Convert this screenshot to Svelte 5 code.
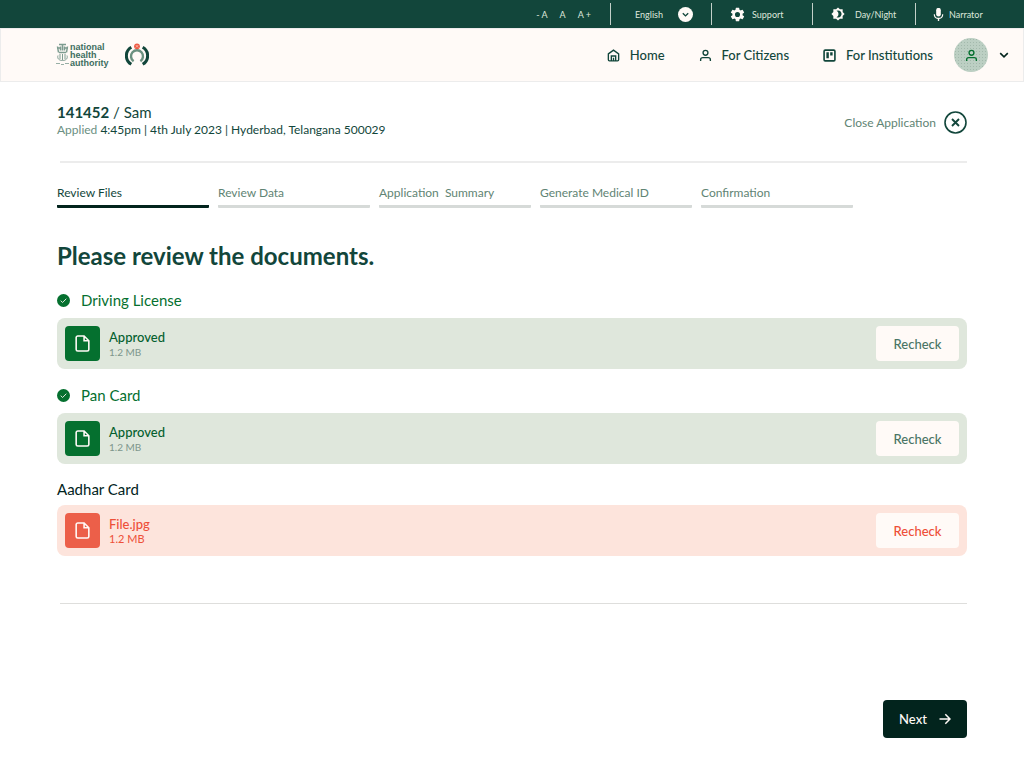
<script>
	const steps = ['Review Files', 'Review Data', 'Application  Summary', 'Generate Medical ID', 'Confirmation'];

	let current = $state(0);
	let language = $state('English');

	const documents = [
		{ name: 'Driving License', label: 'Approved', size: '1.2 MB', approved: true },
		{ name: 'Pan Card', label: 'Approved', size: '1.2 MB', approved: true },
		{ name: 'Aadhar Card', label: 'File.jpg', size: '1.2 MB', approved: false }
	];

	function next() {
		if (current < steps.length - 1) current += 1;
	}
</script>

{#snippet person()}
	<svg class="icon" viewBox="0 0 24 24" aria-hidden="true">
		<circle cx="12" cy="7" r="4.5" />
		<path d="M3 22v-2a4 4 0 0 1 4-4h10a4 4 0 0 1 4 4v2" />
	</svg>
{/snippet}

<div class="topbar">
	<div class="sizes">
		<button type="button" aria-label="Smaller text">- A</button>
		<button type="button" aria-label="Default text">A</button>
		<button type="button" aria-label="Larger text">A +</button>
	</div>
	<label class="tool language">
		<select bind:value={language} aria-label="Language">
			<option>English</option>
			<option>Hindi</option>
		</select>
		<svg width="15" height="15" viewBox="0 0 15 15" aria-hidden="true">
			<circle cx="7.5" cy="7.5" r="7.5" fill="#fffaf7" />
			<path d="M4.8 6.3l2.7 2.6 2.7-2.6" fill="none" stroke="#12463b" stroke-width="1.4" />
		</svg>
	</label>
	<button type="button" class="tool support">
		<svg width="17" height="17" viewBox="0 0 24 24" fill="#fffaf7" aria-hidden="true">
			<path d="M19.14 12.94c.04-.3.06-.61.06-.94s-.02-.64-.07-.94l2.03-1.58a.49.49 0 0 0 .12-.61l-1.92-3.32a.49.49 0 0 0-.59-.22l-2.39.96a7 7 0 0 0-1.62-.94l-.36-2.54a.48.48 0 0 0-.48-.41h-3.84a.47.47 0 0 0-.47.41l-.36 2.54c-.59.24-1.13.57-1.62.94l-2.39-.96a.48.48 0 0 0-.59.22L2.74 8.87a.47.47 0 0 0 .12.61l2.03 1.58a7.4 7.4 0 0 0 0 1.88l-2.03 1.58a.49.49 0 0 0-.12.61l1.92 3.32c.12.22.37.29.59.22l2.39-.96c.5.38 1.03.7 1.62.94l.36 2.54c.05.24.24.41.48.41h3.84c.24 0 .44-.17.47-.41l.36-2.54a7 7 0 0 0 1.62-.94l2.39.96c.22.08.47 0 .59-.22l1.92-3.32a.47.47 0 0 0-.12-.61zM12 15.6a3.6 3.6 0 1 1 0-7.2 3.6 3.6 0 0 1 0 7.2z" />
		</svg>
		Support
	</button>
	<button type="button" class="tool theme">
		<svg width="14" height="14" viewBox="0 0 24 24" fill="#fffaf7" aria-hidden="true">
			<path fill-rule="evenodd" d="M20 8.7V4h-4.7L12 .7 8.7 4H4v4.7L.7 12 4 15.3V20h4.7l3.3 3.3 3.3-3.3H20v-4.7l3.3-3.3zM12 18c-.9 0-1.7-.2-2.5-.6a6 6 0 0 0 0-10.8A6 6 0 1 1 12 18z" />
		</svg>
		Day/Night
	</button>
	<button type="button" class="tool narrator">
		<svg width="11" height="13" viewBox="5 2 14 19" fill="#fffaf7" aria-hidden="true">
			<path d="M12 14.5a3.4 3.4 0 0 0 3.4-3.4V5.2a3.4 3.4 0 0 0-6.8 0v5.9a3.4 3.4 0 0 0 3.4 3.4z" />
			<path d="M17.3 11a5.3 5.3 0 0 1-10.6 0H5a7 7 0 0 0 6 6.9V21h2v-3.1a7 7 0 0 0 6-6.9z" />
		</svg>
		Narrator
	</button>
</div>

<header class="navbar">
	<a href="#home" class="brand">
		<svg width="13" height="24" viewBox="0 0 13 24" fill="none" stroke="#7d9c90" aria-hidden="true">
			<path d="M3 1.5h7M4.5 3.5v4M6.5 1.5v6M8.5 3.5v4M1.5 3.5l1 6M11.5 3.5l-1 6" stroke-width="1.5" />
			<path d="M1 5h3M9 5h3M3 9.5h7" stroke-width="1.5" />
			<path d="M4 11v5M6.5 11v6M9 11v5" />
			<path d="M2 12.5c-1 3 1 5 4.5 5s5.5-2 4.5-5" />
			<path d="M0 20.5h4M5 21.5h3M9 20.5h4" stroke-width=".8" />
		</svg>
		<span class="wordmark">national<br />health<br />authority</span>
	</a>
	<a href="#mission" class="mission" aria-label="Digital health mission">
		<svg width="24" height="24" viewBox="0 0 24 24" fill="none" aria-hidden="true">
			<path d="M6.3 4.3a9.8 9.8 0 0 0 0 17M17.7 4.3a9.8 9.8 0 0 1 0 17" stroke="#12463b" stroke-width="3" />
			<path d="M8.6 18.2a6 6 0 1 1 6.8 0" stroke="#6b9180" stroke-width="2.4" />
			<circle cx="12" cy="3.3" r="2.9" fill="#ee5b46" />
			<path d="M10.8 2.1l2.4 2.4M13.2 2.1l-2.4 2.4" stroke="#f9c3b8" stroke-width=".8" />
		</svg>
	</a>

	<nav>
		<a href="#home">
			<svg class="icon" viewBox="0 0 24 24" aria-hidden="true">
				<path d="M2.5 9L12 2l9.5 7v11a2 2 0 0 1-2 2h-15a2 2 0 0 1-2-2z" />
				<path d="M8 22v-9h8v9M12 16v6" />
			</svg>
			Home
		</a>
		<a href="#citizens">{@render person()}For Citizens</a>
		<a href="#institutions">
			<svg class="icon" viewBox="0 0 24 24" aria-hidden="true">
				<rect x="2" y="2" width="20" height="20" rx="2" stroke-width="3" />
				<path d="M8.5 6v11M15.5 6v6" stroke-width="4.5" />
			</svg>
			For Institutions
		</a>
	</nav>

	<button type="button" class="account" aria-label="Account">
		<span class="avatar">{@render person()}</span>
		<svg width="10" height="10" viewBox="0 0 10 10" aria-hidden="true">
			<path d="M1.2 3.2L5 6.8l3.8-3.6" fill="none" stroke="#02241d" stroke-width="1.6" />
		</svg>
	</button>
</header>

<main>
	<div class="application">
		<div>
			<p class="applicant"><strong>141452</strong> / Sam</p>
			<p class="applied"><span>Applied</span> 4:45pm | 4th July 2023 | Hyderbad, Telangana 500029</p>
		</div>
		<button type="button" class="close">
			Close Application
			<svg width="23" height="23" viewBox="0 0 23 23" fill="none" stroke="#12463b" aria-hidden="true">
				<circle cx="11.5" cy="11.5" r="10.5" stroke-width="1.6" />
				<path d="M8 8l7 7M15 8l-7 7" stroke-width="1.9" />
			</svg>
		</button>
	</div>

	<hr class="thick" />

	<ol class="steps">
		{#each steps as step, i}
			<li class:current={i === current} aria-current={i === current ? 'step' : undefined}>{step}</li>
		{/each}
	</ol>

	<h1>Please review the documents.</h1>

	{#each documents as doc}
		<section class:approved={doc.approved}>
			<h2>
				{#if doc.approved}
					<svg width="13" height="13" viewBox="0 0 13 13" aria-hidden="true">
						<circle cx="6.5" cy="6.5" r="6.5" fill="#05702f" />
						<path d="M3.7 6.7l1.9 1.8 3.7-3.8" fill="none" stroke="#dfe7dc" />
					</svg>
				{/if}
				{doc.name}
			</h2>
			<div class="file">
				<span class="tile">
					<svg width="19" height="19" viewBox="0 0 24 24" aria-hidden="true">
						<path d="M14 2.5H6a2 2 0 0 0-2 2v15a2 2 0 0 0 2 2h12a2 2 0 0 0 2-2v-11zM14 2.5v6h6" />
					</svg>
				</span>
				<div class="info">
					<p>{doc.label}</p>
					<small>{doc.size}</small>
				</div>
				<button type="button">Recheck</button>
			</div>
		</section>
	{/each}

	<hr />

	<div class="actions">
		<button type="button" class="next" onclick={next}>
			Next
			<svg width="12" height="12" viewBox="0 0 12 12" fill="none" stroke="#fffaf7" stroke-width="1.5" aria-hidden="true">
				<path d="M.5 6h10.5M6.3 1.2L11 6l-4.7 4.8" />
			</svg>
		</button>
	</div>
</main>

<style>
	:global(body) {
		background: #fff;
		color: #12463b;
		font-family: Lato, 'Open Sans', sans-serif;
		font-size: 13px;
	}

	button,
	select {
		border: 0;
		padding: 0;
		background: none;
		color: inherit;
		font: inherit;
		cursor: pointer;
	}

	a {
		color: inherit;
		text-decoration: none;
	}

	svg {
		display: block;
		flex: none;
	}

	p,
	h1,
	h2 {
		margin: 0;
	}

	.icon {
		width: 13px;
		height: 13px;
		fill: none;
		stroke: currentColor;
		stroke-width: 2.5;
	}

	.topbar {
		display: flex;
		justify-content: flex-end;
		align-items: center;
		height: 28px;
		background: #12463b;
		color: #dfe7dc;
		font-size: 9px;
	}

	.sizes {
		display: flex;
		gap: 12px;
		padding-right: 19px;
	}

	.tool {
		display: flex;
		align-items: center;
		box-sizing: border-box;
		width: 101px;
		height: 22px;
		border-left: 1px solid #c3d0c9;
	}

	.language {
		justify-content: space-between;
		padding: 0 18px 0 24px;
	}

	.language select {
		appearance: none;
		width: 36px;
	}

	.support {
		gap: 6px;
		padding-left: 17px;
	}

	.theme {
		gap: 10px;
		width: 103px;
		padding-left: 18px;
	}

	.narrator {
		gap: 5px;
		width: 109px;
		padding-left: 17px;
	}

	.navbar {
		display: flex;
		align-items: center;
		box-sizing: border-box;
		height: 54px;
		padding: 0 14px 0 55px;
		border: 1px solid #ececec;
		background: #fffaf7;
	}

	.brand {
		display: flex;
		align-items: center;
		gap: 1px;
		margin-right: 16px;
	}

	.wordmark {
		color: #3d6d5f;
		font: 700 9px/8px 'Liberation Sans', sans-serif;
	}

	nav {
		display: flex;
		gap: 34px;
		margin: 0 21px 0 auto;
		font-weight: 500;
	}

	nav a {
		display: flex;
		align-items: center;
		gap: 10px;
	}

	.account {
		display: flex;
		align-items: center;
		gap: 11px;
	}

	.avatar {
		display: grid;
		place-items: center;
		width: 34px;
		height: 34px;
		border-radius: 50%;
		background: #bccfc3;
		background-image: radial-gradient(#a3b9ac 1px, transparent 1px);
		background-size: 3px 3px;
		color: #05702f;
	}

	main {
		padding: 20px 57px 30px;
	}

	.application {
		display: flex;
		justify-content: space-between;
		align-items: center;
		padding-bottom: 23px;
	}

	.applicant {
		font-size: 15px;
		line-height: 20px;
	}

	.applied {
		font-size: 12px;
		line-height: 16px;
	}

	.applied span {
		color: #6b8f82;
	}

	.close {
		display: flex;
		align-items: center;
		gap: 8px;
		padding-top: 4px;
		color: #5f8474;
		font-size: 12px;
	}

	hr {
		height: 1px;
		margin: 47px 0 96px 3px;
		border: 0;
		background: #dededc;
	}

	.thick {
		height: 2px;
		margin: 0 0 20px 3px;
		background: #ececec;
	}

	.steps {
		display: grid;
		grid-template-columns: repeat(5, minmax(0, 152px));
		gap: 9px;
		margin: 0;
		padding: 0;
		list-style: none;
		color: #5f8474;
		font-size: 12px;
		line-height: 20px;
		white-space: pre-wrap;
	}

	.steps li {
		padding-bottom: 2px;
		border-bottom: 3px solid #d6dad8;
		border-radius: 1px;
	}

	.steps .current {
		border-color: #02241d;
		color: #12463b;
	}

	h1 {
		margin-top: 32px;
		padding-bottom: 2px;
		font-size: 24px;
		line-height: 32px;
		font-weight: 700;
	}

	section {
		margin-top: 15px;
		color: #ee4f38;
	}

	h2 {
		display: flex;
		align-items: center;
		gap: 11px;
		margin-bottom: 6px;
		color: #02241d;
		font-size: 15px;
		line-height: 20px;
		font-weight: 400;
	}

	.approved {
		margin-top: 16px;
		color: #05602f;
	}

	.approved h2 {
		margin-bottom: 8px;
		color: #05702f;
	}

	.file {
		display: flex;
		align-items: center;
		gap: 9px;
		padding: 8px;
		border-radius: 8px;
		background: #fde4dc;
	}

	.approved .file {
		background: #dfe7dc;
	}

	.tile {
		display: grid;
		place-items: center;
		width: 35px;
		height: 35px;
		border-radius: 4px;
		background: #ec5f49;
	}

	.approved .tile {
		background: #05702f;
	}

	.tile svg {
		fill: none;
		stroke: #fffaf7;
		stroke-width: 2;
	}

	.info {
		flex: 1;
		line-height: 16px;
		font-weight: 500;
	}

	.info small {
		display: block;
		font-size: 11px;
		line-height: 14px;
		font-weight: 400;
	}

	.approved small {
		color: #7d968c;
		font-size: 10px;
	}

	.file button {
		width: 83px;
		height: 35px;
		border-radius: 4px;
		background: #fffaf7;
		font-weight: 500;
	}

	.approved button {
		color: #4a7565;
	}

	.actions {
		display: flex;
		justify-content: flex-end;
	}

	.next {
		display: flex;
		justify-content: center;
		align-items: center;
		gap: 12px;
		width: 84px;
		height: 38px;
		border-radius: 4px;
		background: #02241d;
		color: #fffaf7;
		font-weight: 500;
	}
</style>
